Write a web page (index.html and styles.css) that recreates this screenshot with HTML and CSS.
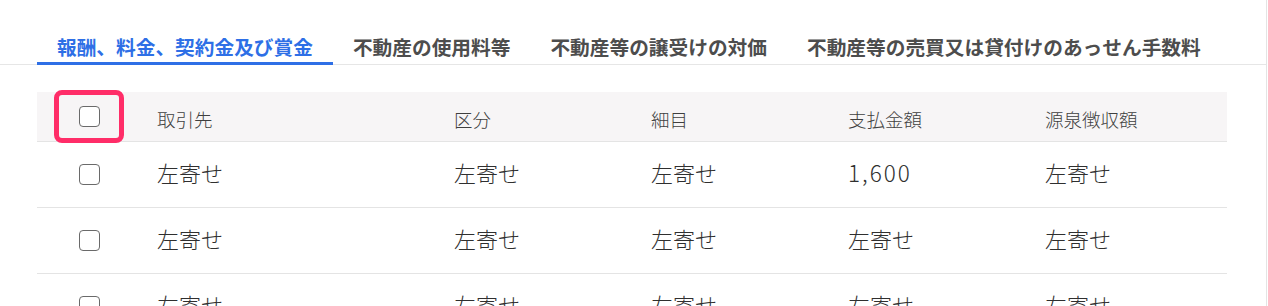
FILE: index.html
```html
<!DOCTYPE html>
<html lang="ja">
<head>
<meta charset="utf-8">
<title>支払調書</title>
<link rel="stylesheet" href="styles.css">
</head>
<body>
<div class="page">
  <nav class="tabs">
    <div class="tab active">報酬、料金、契約金及び賞金</div>
    <div class="tab">不動産の使用料等</div>
    <div class="tab">不動産等の譲受けの対価</div>
    <div class="tab">不動産等の売買又は貸付けのあっせん手数料</div>
  </nav>
  <div class="content">
    <div class="table">
      <div class="row head">
        <div class="cell check"><span class="box"></span><span class="highlight"></span></div>
        <div class="cell">取引先</div>
        <div class="cell">区分</div>
        <div class="cell">細目</div>
        <div class="cell">支払金額</div>
        <div class="cell">源泉徴収額</div>
      </div>
      <div class="row">
        <div class="cell check"><span class="box"></span></div>
        <div class="cell">左寄せ</div>
        <div class="cell">左寄せ</div>
        <div class="cell">左寄せ</div>
        <div class="cell num">1,600</div>
        <div class="cell">左寄せ</div>
      </div>
      <div class="row">
        <div class="cell check"><span class="box"></span></div>
        <div class="cell">左寄せ</div>
        <div class="cell">左寄せ</div>
        <div class="cell">左寄せ</div>
        <div class="cell">左寄せ</div>
        <div class="cell">左寄せ</div>
      </div>
      <div class="row">
        <div class="cell check"><span class="box"></span></div>
        <div class="cell">左寄せ</div>
        <div class="cell">左寄せ</div>
        <div class="cell">左寄せ</div>
        <div class="cell">左寄せ</div>
        <div class="cell">左寄せ</div>
      </div>
    </div>
  </div>
</div>
</body>
</html>
```

FILE: styles.css
```css
html, body {
  margin: 0;
  padding: 0;
  background: #ffffff;
}

body {
  font-family: "Noto Sans CJK JP", "Noto Sans", sans-serif;
  color: #333333;
  overflow: hidden;
}

.page {
  width: 1266px;
  height: 306px;
  border-right: 1px solid #e4e4e4;
  overflow: hidden;
}

.tabs {
  display: flex;
  padding: 33px 0 0 37px;
  border-bottom: 1px solid #e6e6e6;
}

.tab {
  padding: 0 20px 1px;
  line-height: 28px;
  font-size: 19.7px;
  font-weight: 700;
  color: #4d4d4d;
  border-bottom: 3px solid transparent;
  margin-bottom: -1px;
  white-space: nowrap;
}

.tab.active {
  color: #2e6fe6;
  border-bottom-color: #2e6fe6;
}

.content {
  padding: 27px 0 0 37px;
}

.table {
  width: 1190px;
}

.row {
  display: grid;
  grid-template-columns: 104px 297px 197px 197px 197px 198px;
  height: 65px;
  border-bottom: 1px solid #e4e4e4;
  font-size: 22px;
  font-weight: 300;
  color: #2f2f2f;
}

.row.head {
  height: 49px;
  background: #f7f5f6;
  font-size: 18.5px;
  color: #3f3f3f;
}

.cell {
  display: flex;
  align-items: center;
  padding-left: 16px;
  padding-bottom: 5px;
  white-space: nowrap;
}

.cell.num {
  font-size: 22.5px;
  letter-spacing: 2px;
}

.row.head .cell {
  padding-top: 4px;
  padding-bottom: 0;
}

.cell.check {
  position: relative;
  justify-content: center;
  padding-left: 0;
  padding-bottom: 0;
}

.row.head .cell.check {
  padding-top: 0;
}

.box {
  width: 21px;
  height: 21px;
  box-sizing: border-box;
  border: 1.8px solid #6a6a6a;
  border-radius: 4px;
  background: #ffffff;
}

.highlight {
  position: absolute;
  left: 17px;
  top: -2px;
  width: 70px;
  height: 53px;
  box-sizing: border-box;
  border: 5px solid #ff2d68;
  border-radius: 8px;
}
```
